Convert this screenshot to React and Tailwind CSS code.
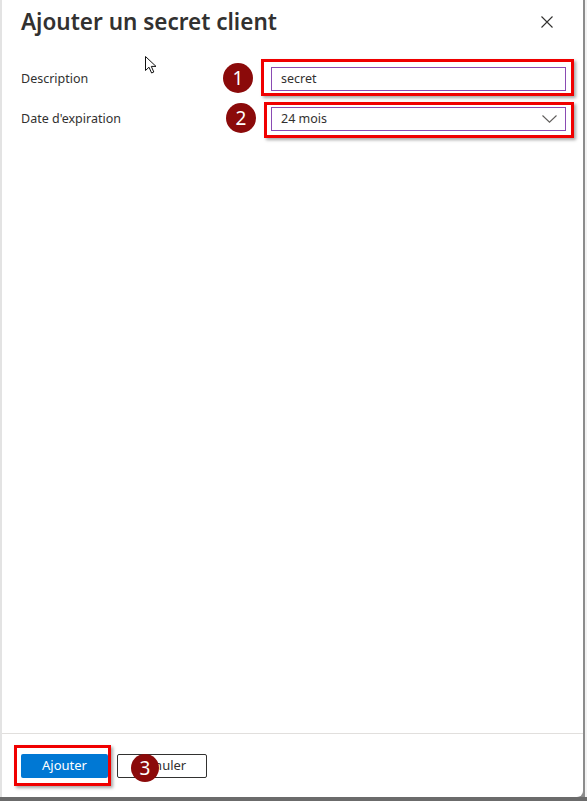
import React from "react";

const font = { fontFamily: '"Noto Sans", "Open Sans", sans-serif' };

function Badge({ n, className }) {
  return (
    <div
      className={
        "absolute rounded-full bg-[#8b0a0a] text-white flex items-center justify-center text-[19px] leading-none " +
        className
      }
    >
      {n}
    </div>
  );
}

export default function App() {
  return (
    <div
      className="relative w-[587px] h-[801px] bg-[#8c8c8c] flex flex-col overflow-hidden text-[#323130]"
      style={font}
    >
      <div className="flex h-[797px]">
        <div className="w-[583px] h-full bg-white rounded-br-[6px] border-l-2 border-[#e3e3e3] flex flex-col">
          {/* header */}
          <div className="flex items-start justify-between pl-[19px] pr-[30px] pt-[6px] h-[52px]">
            <h1 className="text-[22.5px] leading-[32px] font-semibold">
              Ajouter un secret client
            </h1>
            <button className="mt-[10px] w-[12px] h-[12px] flex items-center justify-center">
              <svg width="12" height="12" viewBox="0 0 12 12">
                <path d="M0.5 0.5 L11.5 11.5 M11.5 0.5 L0.5 11.5" stroke="#323130" strokeWidth="1.1" />
              </svg>
            </button>
          </div>

          {/* form */}
          <div className="flex flex-col gap-[16px] pt-[15px] pl-[19px]">
            <div className="flex items-center">
              <label className="w-[250px] text-[12.5px]">Description</label>
              <div className="w-[295px] h-[24px] border border-[#8a4bb3] flex items-center px-[9px] text-[12.5px]">
                secret
              </div>
            </div>
            <div className="flex items-center">
              <label className="w-[250px] text-[12.5px]">Date d'expiration</label>
              <div className="w-[295px] h-[24px] border border-[#8a4bb3] flex items-center justify-between pl-[9px] pr-[8px] text-[12.5px]">
                <span>24 mois</span>
                <svg width="15" height="8" viewBox="0 0 15 8">
                  <path d="M0.5 0.5 L7.5 7.2 L14.5 0.5" fill="none" stroke="#605e5c" strokeWidth="1.1" />
                </svg>
              </div>
            </div>
          </div>

          <div className="flex-1" />

          {/* footer */}
          <div className="h-[64px] border-t border-[#e1dfdd] flex items-start gap-[9px] pt-[20px] pl-[19px]">
            <button className="w-[87px] h-[24px] bg-[#0078d4] text-white text-[13px] rounded-[2px] flex items-center justify-center">
              Ajouter
            </button>
            <button className="w-[90px] h-[24px] border border-[#323130] bg-white text-[13px] rounded-[2px] flex items-center justify-center">
              Annuler
            </button>
          </div>
        </div>
        <div className="w-[2px] h-full bg-[#8c8c8c]" />
        <div className="w-[2px] h-full bg-[#f2f2f2]" />
      </div>
      <div className="h-[4px] bg-[#6b6b6b]" />

      {/* annotations */}
      <div className="absolute left-[261px] top-[59px] w-[313px] h-[37px] border-[3px] border-[#f00000] shadow-[2px_2px_3px_rgba(0,0,0,0.35)]" />
      <div className="absolute left-[264px] top-[102px] w-[310px] h-[36px] border-[3px] border-[#f00000] shadow-[2px_2px_3px_rgba(0,0,0,0.35)]" />
      <div className="absolute left-[14px] top-[745px] w-[97px] h-[41px] border-[3px] border-[#f00000] shadow-[2px_2px_3px_rgba(0,0,0,0.35)]" />
      <Badge n="1" className="left-[223px] top-[63px] w-[30px] h-[30px]" />
      <Badge n="2" className="left-[226px] top-[103px] w-[30px] h-[30px]" />
      <Badge n="3" className="left-[131px] top-[754px] w-[28px] h-[28px]" />

      {/* mouse cursor */}
      <svg className="absolute left-[144px] top-[55px]" width="16" height="20" viewBox="0 0 16 20">
        <path
          d="M1.5 1.5 L1.5 15.5 L5 12.2 L7.6 18 L9.8 17 L7.3 11.4 L12 11.4 Z"
          fill="white"
          stroke="#111"
          strokeWidth="1"
          strokeLinejoin="miter"
        />
      </svg>
    </div>
  );
}
